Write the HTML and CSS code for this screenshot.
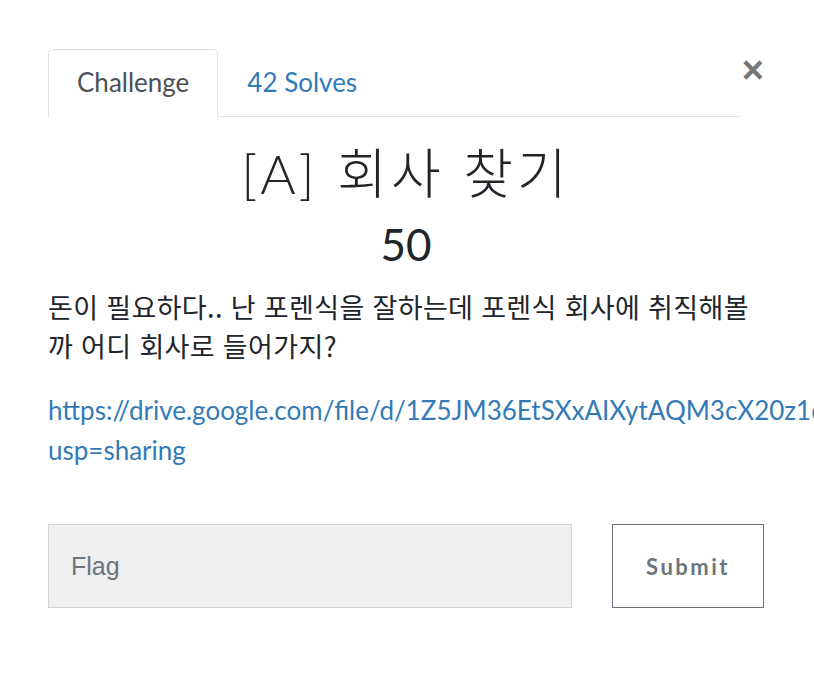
FILE: index.html
```html
<!DOCTYPE html>
<html lang="ko">
<head>
<meta charset="utf-8">
<title>Challenge</title>
<link rel="stylesheet" href="styles.css">
</head>
<body>
<div class="modal">
  <div class="header">
    <ul class="tabs">
      <li class="tab active">Challenge</li>
      <li class="tab"><a href="#">42 Solves</a></li>
    </ul>
    <button class="close" type="button">×</button>
  </div>
  <div class="body">
    <h2 class="title">[A] 회사 찾기</h2>
    <h3 class="value">50</h3>
    <p class="desc">돈이 필요하다.. 난 포렌식을 잘하는데 포렌식 회사에 취직해볼까 어디 회사로 들어가지?</p>
    <p class="link"><a href="#">https://drive.google.com/file/d/1Z5JM36EtSXxAIXytAQM3cX20z1qRbTmWk/view?usp=sharing</a></p>
    <form class="submit-row">
      <input class="flag" type="text" placeholder="Flag">
      <button class="submit" type="button">Submit</button>
    </form>
  </div>
</div>
</body>
</html>
```
FILE: styles.css
```css
html, body {
  margin: 0;
  padding: 0;
  overflow: hidden;
  background: #fff;
}
body {
  font-family: Lato, "Noto Sans CJK KR", sans-serif;
  color: #212529;
}
.modal {
  width: 716px;
  padding: 49px 0 0 48px;
}
.header {
  display: flex;
  align-items: flex-start;
}
.tabs {
  flex: 1;
  display: flex;
  list-style: none;
  margin: 0;
  padding: 0;
  border-bottom: 1px solid #dee2e6;
  max-width: 692px;
}
.tab {
  height: 67px;
  padding: 0 28px 3px;
  box-sizing: border-box;
  display: flex;
  align-items: center;
  font-size: 26px;
  border: 1px solid transparent;
  border-bottom: none;
  border-radius: 5px 5px 0 0;
  margin-bottom: -1px;
}
.tab.active {
  color: #495057;
  border-color: #dee2e6;
  background: #fff;
  height: 68px;
}
.tab a {
  color: #337ab7;
  text-decoration: none;
}
.close {
  margin-left: auto;
  margin-top: 2px;
  border: none;
  background: none;
  padding: 0;
  font-family: "Liberation Sans", Arial, sans-serif;
  font-size: 38px;
  font-weight: bold;
  color: #777;
  line-height: 1;
}
.title {
  margin: 24px 0 0;
  text-align: center;
  font-weight: 300;
  font-size: 54px;
  line-height: 66px;
  letter-spacing: 4px;
  font-family: Lato, "Noto Sans CJK KR", sans-serif;
}
.value {
  margin: 11px 0 0;
  text-align: center;
  font-weight: 400;
  font-size: 44px;
  line-height: 52px;
}
.desc {
  margin: 17px 0 0;
  font-size: 27px;
  line-height: 39px;
  letter-spacing: 0.35px;
  font-family: "Noto Sans CJK KR", Lato, sans-serif;
}
.link {
  margin: 25px 0 0;
  font-size: 26px;
  line-height: 40px;
}
.link a {
  color: #337ab7;
  text-decoration: none;
}
.submit-row {
  display: flex;
  gap: 40px;
  margin-top: 54px;
}
.flag {
  width: 524px;
  height: 84px;
  box-sizing: border-box;
  border: 1px solid #ced4da;
  background: #efefef;
  padding: 0 22px;
  font-family: "Liberation Sans", Arial, sans-serif;
  font-size: 25px;
  color: #495057;
}
.flag::placeholder {
  color: #6c757d;
}
.submit {
  width: 152px;
  height: 84px;
  box-sizing: border-box;
  border: 1px solid #6c757d;
  background: #fff;
  font-family: Lato, sans-serif;
  font-weight: 700;
  font-size: 22px;
  letter-spacing: 2.5px;
  color: #6c757d;
}
```
